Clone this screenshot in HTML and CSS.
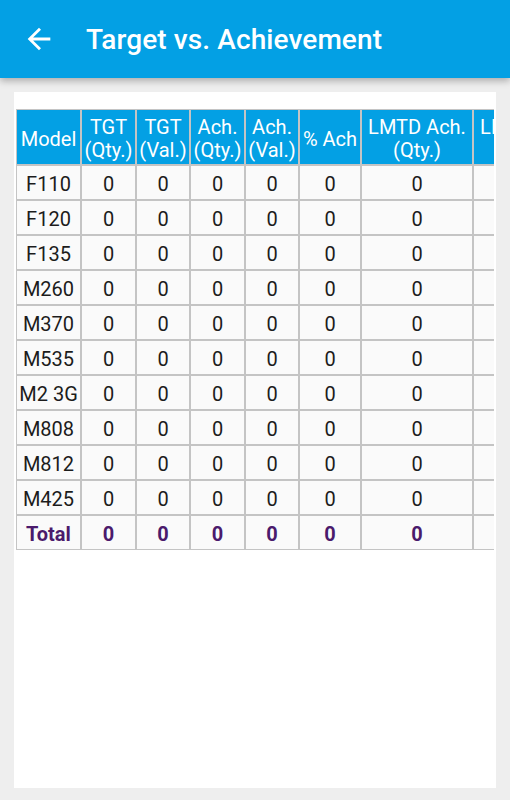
FILE: index.html
```html
<!DOCTYPE html>
<html lang="en">
<head>
<meta charset="utf-8">
<title>Target vs. Achievement</title>
<link rel="stylesheet" href="styles.css">
</head>
<body>
<header class="appbar">
  <button class="back" aria-label="Back">
    <svg viewBox="0 0 24 24" width="34" height="34"><path fill="#fff" d="M20 11H7.83l5.59-5.59L12 4l-8 8 8 8 1.41-1.41L7.83 13H20v-2z"/></svg>
  </button>
  <h1 class="title">Target vs. Achievement</h1>
</header>
<main class="content">
  <section class="card">
    <div class="scroller">
      <table class="grid">
        <colgroup>
          <col class="c-model"><col class="c-55"><col class="c-54"><col class="c-55"><col class="c-54"><col class="c-62"><col class="c-112"><col class="c-112">
        </colgroup>
        <thead>
          <tr>
            <th>Model</th>
            <th>TGT<br>(Qty.)</th>
            <th>TGT<br>(Val.)</th>
            <th>Ach.<br>(Qty.)</th>
            <th>Ach.<br>(Val.)</th>
            <th>% Ach</th>
            <th>LMTD Ach.<br>(Qty.)</th>
            <th>LMTD Ach.<br>(Val.)</th>
          </tr>
        </thead>
        <tbody>
          <tr><td>F110</td><td>0</td><td>0</td><td>0</td><td>0</td><td>0</td><td>0</td><td>0</td></tr>
          <tr><td>F120</td><td>0</td><td>0</td><td>0</td><td>0</td><td>0</td><td>0</td><td>0</td></tr>
          <tr><td>F135</td><td>0</td><td>0</td><td>0</td><td>0</td><td>0</td><td>0</td><td>0</td></tr>
          <tr><td>M260</td><td>0</td><td>0</td><td>0</td><td>0</td><td>0</td><td>0</td><td>0</td></tr>
          <tr><td>M370</td><td>0</td><td>0</td><td>0</td><td>0</td><td>0</td><td>0</td><td>0</td></tr>
          <tr><td>M535</td><td>0</td><td>0</td><td>0</td><td>0</td><td>0</td><td>0</td><td>0</td></tr>
          <tr><td>M2 3G</td><td>0</td><td>0</td><td>0</td><td>0</td><td>0</td><td>0</td><td>0</td></tr>
          <tr><td>M808</td><td>0</td><td>0</td><td>0</td><td>0</td><td>0</td><td>0</td><td>0</td></tr>
          <tr><td>M812</td><td>0</td><td>0</td><td>0</td><td>0</td><td>0</td><td>0</td><td>0</td></tr>
          <tr><td>M425</td><td>0</td><td>0</td><td>0</td><td>0</td><td>0</td><td>0</td><td>0</td></tr>
          <tr class="total"><td>Total</td><td>0</td><td>0</td><td>0</td><td>0</td><td>0</td><td>0</td><td>0</td></tr>
        </tbody>
      </table>
    </div>
  </section>
</main>
</body>
</html>
```

FILE: styles.css
```css
* { box-sizing: border-box; }

html, body {
  margin: 0;
  padding: 0;
  background: #eeeeee;
  font-family: Roboto, "Noto Sans", "Liberation Sans", sans-serif;
}

.appbar {
  position: relative;
  z-index: 1;
  height: 78px;
  background: #03a0e4;
  display: flex;
  align-items: center;
  padding-left: 22px;
  gap: 30px;
  box-shadow: 0 3px 7px rgba(0, 0, 0, 0.28);
}

.back {
  width: 34px;
  height: 34px;
  padding: 0;
  border: 0;
  background: none;
  display: flex;
}

.title {
  margin: 0;
  color: #ffffff;
  font-size: 28px;
  font-weight: 500;
  letter-spacing: 0.1px;
}

.content {
  padding: 14px 14px 12px;
}

.card {
  height: 696px;
  background: #ffffff;
  padding: 17px 2px 0;
}

.scroller {
  overflow: hidden;
}

.grid {
  table-layout: fixed;
  width: 569px;
  border-collapse: separate;
  border-spacing: 0;
  font-size: 20px;
}

.c-model { width: 65px; }
.c-55 { width: 55px; }
.c-54 { width: 54px; }
.c-62 { width: 62px; }
.c-112 { width: 112px; }

.grid th,
.grid td {
  border: 1px solid #c4c4c4;
  text-align: center;
  padding: 0;
  white-space: nowrap;
  overflow: hidden;
}

.grid th {
  height: 56px;
  background: #03a0e4;
  color: #ffffff;
  font-weight: 400;
  line-height: 23px;
  padding-top: 4px;
}

.grid td {
  height: 35px;
  background: #fafafa;
  color: #1c1c1c;
  line-height: 23px;
  padding-top: 4px;
}

.grid .total td {
  color: #4b1a6c;
  font-weight: 700;
}
```
